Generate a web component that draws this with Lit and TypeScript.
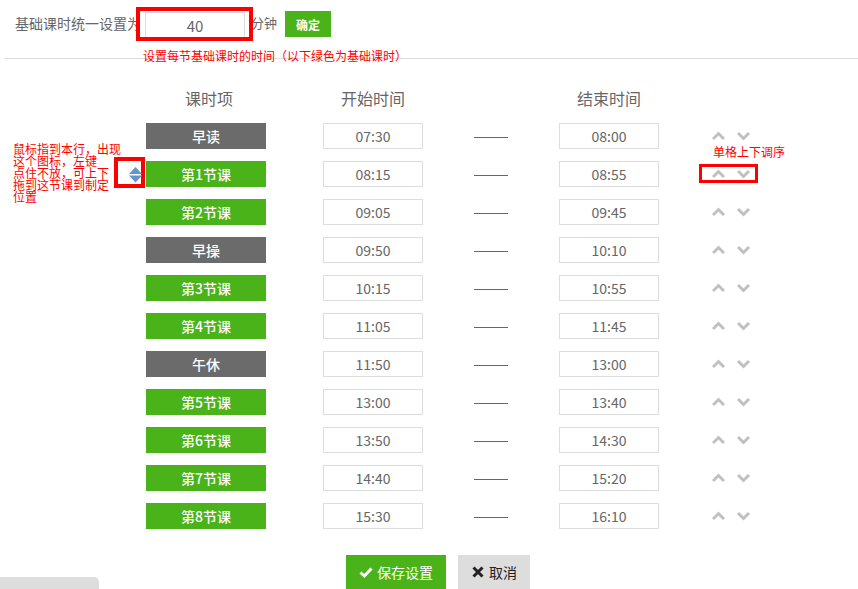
import { LitElement, html, css, svg } from "lit";
import { customElement } from "lit/decorators.js";

interface Row { name: string; start: string; end: string; base: boolean; }
const rows: Row[] = [
  { name: "早读", start: "07:30", end: "08:00", base: false },
  { name: "第1节课", start: "08:15", end: "08:55", base: true },
  { name: "第2节课", start: "09:05", end: "09:45", base: true },
  { name: "早操", start: "09:50", end: "10:10", base: false },
  { name: "第3节课", start: "10:15", end: "10:55", base: true },
  { name: "第4节课", start: "11:05", end: "11:45", base: true },
  { name: "午休", start: "11:50", end: "13:00", base: false },
  { name: "第5节课", start: "13:00", end: "13:40", base: true },
  { name: "第6节课", start: "13:50", end: "14:30", base: true },
  { name: "第7节课", start: "14:40", end: "15:20", base: true },
  { name: "第8节课", start: "15:30", end: "16:10", base: true },
];

const up = svg`<path d="M1 8 L6.5 2.5 L12 8" fill="none" stroke="#c0c0c0" stroke-width="3"/>`;
const down = svg`<path d="M1 2 L6.5 7.5 L12 2" fill="none" stroke="#c0c0c0" stroke-width="3"/>`;

@customElement("app-root")
export class AppRoot extends LitElement {
  static styles = css`
    :host {
      display: block;
      position: relative;
      width: 858px;
      height: 589px;
      overflow: hidden;
      background: #fff;
      color: #666;
      font-family: "Noto Sans CJK SC", "Noto Sans", sans-serif;
      font-size: 14px;
    }
    .top {
      display: flex;
      align-items: center;
      height: 26px;
      padding: 11px 0 0 15px;
    }
    .top .lead { width: 130px; white-space: nowrap; font-size: 14px; line-height: 24px; height: 26px; }
    .base-input {
      box-sizing: border-box;
      width: 100px;
      height: 26px;
      border: 1px solid #ddd;
      display: flex;
      align-items: center;
      justify-content: center;
      font-size: 15px;
      margin-top: 2px;
    }
    .unit { margin-left: 6px; width: 34px; white-space: nowrap; font-size: 13px; line-height: 24px; height: 26px; }
    .ok {
      width: 46px;
      height: 26px;
      background: #4ab31a;
      color: #fff;
      font-size: 12px;
      font-weight: 700;
      display: flex;
      align-items: center;
      justify-content: center;
    }
    .rule { height: 1px; background: #ddd; margin: 21px 0 0 4px; }
    .head {
      display: flex;
      height: 24px;
      margin-top: 27px;
      padding-left: 146px;
      font-size: 16px;
      line-height: 24px;
      color: #666;
    }
    .head div { text-align: center; white-space: nowrap; }
    .c-name { box-sizing: border-box; width: 120px; padding-left: 6px; }
    .c-start { width: 100px; margin-left: 57px; }
    .c-end { width: 100px; margin-left: 136px; }
    .table { display: flex; flex-direction: column; gap: 12px; margin-top: 13px; padding-left: 146px; }
    .row { display: flex; height: 26px; align-items: center; }
    .name {
      width: 120px;
      height: 26px;
      line-height: 26px;
      text-align: center;
      color: #fff;
      font-size: 14px;
      font-weight: 500;
      background: #6b6b6b;
    }
    .name.base { background: #4ab31a; }
    .time {
      box-sizing: border-box;
      width: 100px;
      height: 26px;
      margin-left: 57px;
      border: 1px solid #ddd;
      text-align: center;
      line-height: 24px;
      font-size: 14px;
    }
    .dash { width: 34px; height: 1px; background: #666; margin: 2px 51px 0; }
    .time.end { margin-left: 0; }
    .arrows { display: flex; gap: 12px; margin-left: 53px; }
    .arrows svg { display: block; width: 13px; height: 10px; }
    .actions { display: flex; gap: 12px; margin-top: 26px; padding-left: 346px; }
    .btn {
      height: 34px;
      display: flex;
      align-items: center;
      justify-content: center;
      gap: 4px;
      font-size: 14px;
    }
    .save { width: 100px; background: #4ab31a; color: #fff; }
    .cancel { width: 72px; background: #ddd; color: #222; }
    .btn svg { display: block; width: 14px; height: 14px; }
    .note {
      position: absolute;
      color: #f00;
      font-size: 12px;
      line-height: 12px;
      white-space: nowrap;
    }
    .box { position: absolute; box-sizing: border-box; border-style: solid; border-color: #f00; }
    .box-input { left: 136px; top: 7px; width: 117px; height: 34px; border-width: 4px; }
    .box-handle { left: 114px; top: 157px; width: 31px; height: 31px; border-width: 4px; }
    .box-arrows { left: 699px; top: 164px; width: 59px; height: 19px; border-width: 3px; }
    .handle { position: absolute; left: 129px; top: 166px; width: 13px; height: 17px; display: block; }
    .scroll {
      position: absolute;
      left: 0;
      top: 577px;
      width: 99px;
      height: 12px;
      background: #ddd;
      border-top-right-radius: 5px;
    }
  `;

  render() {
    return html`
      <div class="top">
        <div class="lead">基础课时统一设置为</div>
        <div class="base-input">40</div>
        <div class="unit">分钟</div>
        <div class="ok">确定</div>
      </div>
      <div class="rule"></div>
      <div class="head">
        <div class="c-name">课时项</div>
        <div class="c-start">开始时间</div>
        <div class="c-end">结束时间</div>
      </div>
      <div class="table">
        ${rows.map(
          (r) => html`<div class="row">
            <div class="name ${r.base ? "base" : ""}">${r.name}</div>
            <div class="time">${r.start}</div>
            <div class="dash"></div>
            <div class="time end">${r.end}</div>
            <div class="arrows">
              <svg viewBox="0 0 13 10">${up}</svg>
              <svg viewBox="0 0 13 10">${down}</svg>
            </div>
          </div>`
        )}
      </div>
      <div class="actions">
        <div class="btn save">
          <svg viewBox="0 0 14 14"><path d="M1.5 7.5 L5.3 11 L12.5 3.5" fill="none" stroke="#fff" stroke-width="3"/></svg>
          保存设置
        </div>
        <div class="btn cancel">
          <svg viewBox="0 0 14 14"><path d="M2.5 2.5 L11.5 11.5 M11.5 2.5 L2.5 11.5" fill="none" stroke="#222" stroke-width="3"/></svg>
          取消
        </div>
      </div>
      <div class="box box-input"></div>
      <div class="note" style="left:143px;top:50px">设置每节基础课时的时间（以下绿色为基础课时）</div>
      <div class="note" style="left:13px;top:143px">鼠标指到本行，出现<br />这个图标，左键<br />点住不放，可上下<br />拖到这节课到制定<br />位置</div>
      <div class="box box-handle"></div>
      <svg class="handle" viewBox="0 0 13 17">
        <path d="M6.5 1 L13 8 H0 Z" fill="#6496cc" />
        <path d="M0 9.5 H13 L6.5 16.5 Z" fill="#6496cc" />
      </svg>
      <div class="note" style="left:713px;top:146px">单格上下调序</div>
      <div class="box box-arrows"></div>
      <div class="scroll"></div>
    `;
  }
}
